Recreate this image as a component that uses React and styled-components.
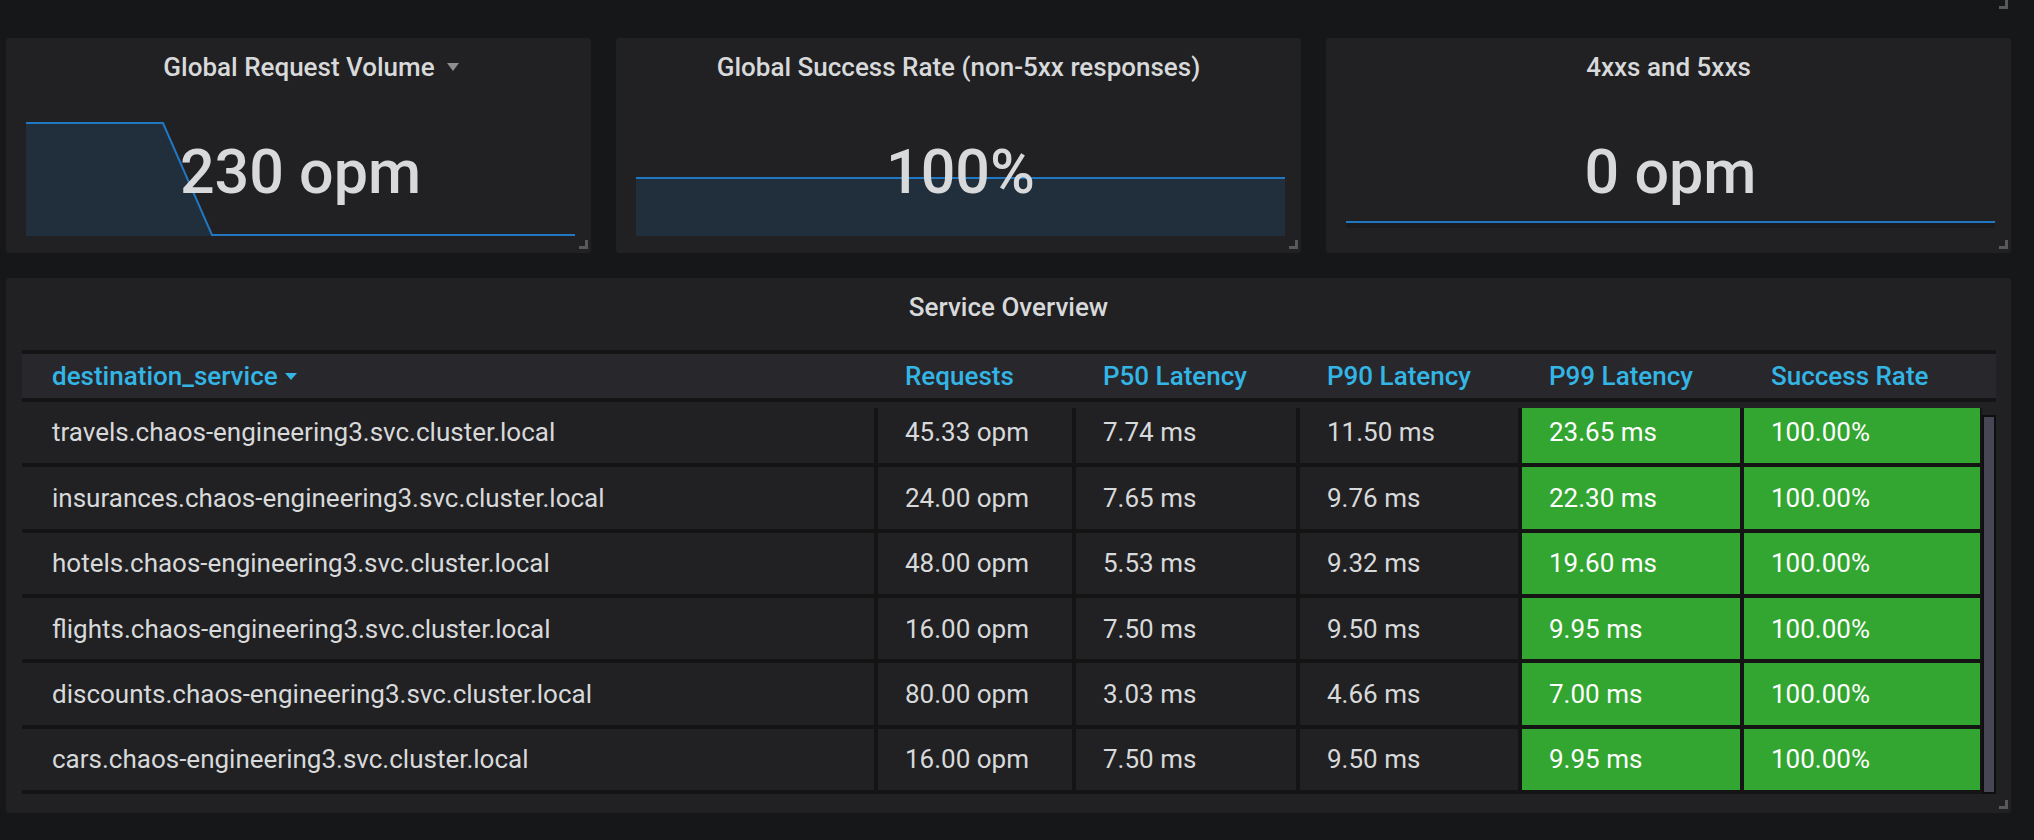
import React from 'react';
import styled, { createGlobalStyle } from 'styled-components';

const GlobalStyle = createGlobalStyle`
  html, body {
    margin: 0;
    background: #161719;
  }
  body {
    font-family: Roboto, "Noto Sans", "Liberation Sans", sans-serif;
    color: #d8d9da;
    -webkit-font-smoothing: antialiased;
  }
  * { box-sizing: border-box; }
`;

const Page = styled.div`
  position: relative;
  height: 840px;
  padding: 38px 23px 0 6px;
  display: flex;
  flex-direction: column;
  gap: 25px;
`;

// corner of the panel above, scrolled out of view
const TopHandle = styled.div`
  position: absolute;
  top: 0;
  left: 1999px;
  width: 9px;
  height: 9px;
  border-right: 3px solid #59595c;
  border-bottom: 3px solid #59595c;
`;

const StatRow = styled.div`
  display: grid;
  grid-template-columns: 585px 685px 685px;
  gap: 25px;
`;

const Panel = styled.div`
  position: relative;
  height: ${p => p.$height}px;
  background: #212124;
  border-radius: 3px;
  display: flex;
  flex-direction: column;
`;

const ResizeHandle = styled.div`
  position: absolute;
  right: 3px;
  bottom: 4px;
  width: 9px;
  height: 9px;
  border-right: 3px solid #59595c;
  border-bottom: 3px solid #59595c;
`;

const PanelTitle = styled.div`
  height: 58px;
  line-height: 58px;
  text-align: center;
  font-size: 26px;
  font-weight: 500;
  color: #d8d9da;
  white-space: nowrap;
`;

const TitleCaret = styled.span`
  display: inline-block;
  vertical-align: middle;
  margin: -4px -25px 0 12px;
  border-left: 6.5px solid transparent;
  border-right: 6.5px solid transparent;
  border-top: 8px solid #8e8e90;
`;

const StatBody = styled.div`
  position: relative;
  flex: 1;
  display: flex;
  align-items: center;
  justify-content: center;
  padding: 13px 16px 17px 20px;
`;

const StatValue = styled.div`
  position: relative;
  z-index: 1;
  font-size: 61px;
  font-weight: 500;
  line-height: 1;
  color: #d8d9da;
`;

const Spark = styled.svg`
  position: absolute;
  left: 20px;
  right: 16px;
  bottom: 17px;
  height: 114px;
  width: calc(100% - 36px);
`;

const TableWrap = styled.div`
  margin: 14px 15px 0 16px;
`;

const cols = '856px 198px 224px 222px 222px 1fr';

const HeadRow = styled.div`
  display: grid;
  grid-template-columns: ${cols};
  height: 52px;
  background: #28282c;
  border-top: 4px solid #141414;
  border-bottom: 4px solid #141414;
`;

const HeadCell = styled.div`
  padding-left: ${p => (p.$first ? 30 : 27)}px;
  line-height: 44px;
  font-size: 26px;
  font-weight: 500;
  color: #33b5e5;
  white-space: nowrap;
`;

const SortCaret = styled.span`
  display: inline-block;
  vertical-align: middle;
  margin: -3px 0 0 7px;
  border-left: 6.5px solid transparent;
  border-right: 6.5px solid transparent;
  border-top: 7px solid #33b5e5;
`;

const Body = styled.div`
  display: flex;
`;

const Rows = styled.div`
  flex: 1;
`;

const Row = styled.div`
  display: grid;
  grid-template-columns: ${cols};
  height: 65.33px;
  padding-top: ${p => (p.$first ? 6 : 0)}px;
  border-bottom: 4px solid #141414;
`;

const Cell = styled.div`
  display: flex;
  align-items: center;
  padding-left: ${p => (p.$name ? 30 : 27)}px;
  padding-bottom: ${p => (p.$first ? 8 : 0)}px;
  border-right: ${p => (p.$last ? 2 : 4)}px solid #141414;
  background: ${p => (p.$good ? '#32a631' : '#212124')};
  color: ${p => (p.$good ? '#ffffff' : '#d8d9da')};
  font-size: 26px;
  white-space: nowrap;
`;

const ScrollTrack = styled.div`
  width: 14px;
  padding-top: 13px;
  display: flex;
`;

const ScrollThumb = styled.div`
  flex: 1;
  background: #464655;
  border: 2px solid #0e0e0f;
`;

const services = [
  ['travels.chaos-engineering3.svc.cluster.local', '45.33 opm', '7.74 ms', '11.50 ms', '23.65 ms', '100.00%'],
  ['insurances.chaos-engineering3.svc.cluster.local', '24.00 opm', '7.65 ms', '9.76 ms', '22.30 ms', '100.00%'],
  ['hotels.chaos-engineering3.svc.cluster.local', '48.00 opm', '5.53 ms', '9.32 ms', '19.60 ms', '100.00%'],
  ['flights.chaos-engineering3.svc.cluster.local', '16.00 opm', '7.50 ms', '9.50 ms', '9.95 ms', '100.00%'],
  ['discounts.chaos-engineering3.svc.cluster.local', '80.00 opm', '3.03 ms', '4.66 ms', '7.00 ms', '100.00%'],
  ['cars.chaos-engineering3.svc.cluster.local', '16.00 opm', '7.50 ms', '9.50 ms', '9.95 ms', '100.00%'],
];

const headers = ['Requests', 'P50 Latency', 'P90 Latency', 'P99 Latency', 'Success Rate'];

const LINE = '#1f78c1';
const FILL = 'rgba(31, 120, 193, 0.15)';

function VolumeSpark() {
  return (
    <Spark viewBox="0 0 549 114" preserveAspectRatio="none">
      <polygon points="0,1 137,1 186,113 549,113 549,114 0,114" fill={FILL} />
      <polyline points="0,1 137,1 186,113 549,113" fill="none" stroke={LINE} strokeWidth="2" />
    </Spark>
  );
}

function FlatSpark({ y, fill }) {
  return (
    <Spark viewBox="0 0 649 114" preserveAspectRatio="none">
      {fill === 'area' && <rect x="0" y={y} width="649" height={114 - y} fill={FILL} />}
      {fill === 'strip' && <rect x="0" y={y + 1} width="649" height="5" fill="rgba(0,0,0,0.18)" />}
      <line x1="0" y1={y} x2="649" y2={y} stroke={LINE} strokeWidth="2" />
    </Spark>
  );
}

export default function App() {
  return (
    <>
      <GlobalStyle />
      <Page>
        <TopHandle />
        <StatRow>
          <Panel $height={215}>
            <PanelTitle>
              Global Request Volume<TitleCaret />
            </PanelTitle>
            <StatBody>
              <VolumeSpark />
              <StatValue>230 opm</StatValue>
            </StatBody>
            <ResizeHandle />
          </Panel>
          <Panel $height={215}>
            <PanelTitle>Global Success Rate (non-5xx responses)</PanelTitle>
            <StatBody>
              <FlatSpark y={56} fill="area" />
              <StatValue>100%</StatValue>
            </StatBody>
            <ResizeHandle />
          </Panel>
          <Panel $height={215}>
            <PanelTitle>4xxs and 5xxs</PanelTitle>
            <StatBody>
              <FlatSpark y={100} fill="strip" />
              <StatValue>0 opm</StatValue>
            </StatBody>
            <ResizeHandle />
          </Panel>
        </StatRow>

        <Panel $height={535}>
          <PanelTitle>Service Overview</PanelTitle>
          <TableWrap>
            <HeadRow>
              <HeadCell $first>
                destination_service<SortCaret />
              </HeadCell>
              {headers.map(h => (
                <HeadCell key={h}>{h}</HeadCell>
              ))}
            </HeadRow>
            <Body>
              <Rows>
                {services.map((r, i) => (
                  <Row key={r[0]} $first={i === 0}>
                    {r.map((v, j) => (
                      <Cell
                        key={j}
                        $name={j === 0}
                        $first={i === 0}
                        $good={j >= 4}
                        $last={j === 5}
                      >
                        {v}
                      </Cell>
                    ))}
                  </Row>
                ))}
              </Rows>
              <ScrollTrack>
                <ScrollThumb />
              </ScrollTrack>
            </Body>
          </TableWrap>
          <ResizeHandle />
        </Panel>
      </Page>
    </>
  );
}
